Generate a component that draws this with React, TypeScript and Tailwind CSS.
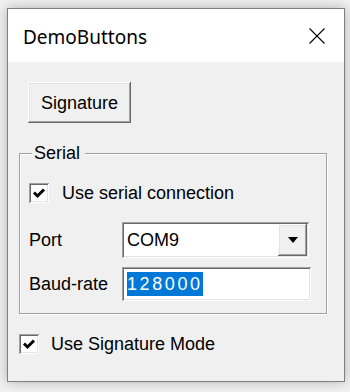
const sunken =
  'shadow-[inset_1px_1px_0_#a0a0a0,inset_-1px_-1px_0_#ffffff,inset_2px_2px_0_#696969,inset_-2px_-2px_0_#e3e3e3]';
const raised =
  'shadow-[inset_-1px_-1px_0_#696969,inset_1px_1px_0_#ffffff,inset_-2px_-2px_0_#a0a0a0,inset_2px_2px_0_#e3e3e3]';

function CheckBox({ label, gap }: { label: string; gap: string }) {
  return (
    <div className={`flex items-center h-[20px] ${gap}`}>
      <div className={`w-[20px] h-[20px] bg-white flex items-center justify-center ${sunken}`}>
        <svg width="14" height="14" viewBox="0 0 14 14">
          <path d="M2 6.5 L5.5 10 L12 3.5" fill="none" stroke="#000" strokeWidth="3" />
        </svg>
      </div>
      <span className="text-[18px] leading-[20px] text-black">{label}</span>
    </div>
  );
}

export default function App() {
  return (
    <div
      className="w-[350px] h-[392px] bg-[#f2f2f2] pt-[8px] pl-[7px] overflow-hidden"
      style={{ fontFamily: '"Liberation Sans", Arial, sans-serif' }}
    >
      <div className="w-[338px] h-[374px] border border-[#7f7f7f] bg-white flex flex-col shadow-[0_0_12px_rgba(0,0,0,0.28)]">
        {/* title bar */}
        <div className="h-[53px] flex items-center justify-between pl-[15px] pr-[19px] shrink-0">
          <span
            className="text-[19px] leading-[24px] text-black mt-[2px]"
            style={{ fontFamily: '"Noto Sans", "Open Sans", sans-serif' }}
          >
            DemoButtons
          </span>
          <svg width="16" height="16" viewBox="0 0 16 16">
            <path d="M0.5 0.5 L15.5 15.5 M15.5 0.5 L0.5 15.5" stroke="#000" strokeWidth="1.1" />
          </svg>
        </div>

        {/* client area */}
        <div className="flex-1 bg-[#f0f0f0] pl-[11px] pt-[20px]">
          <button
            className={`ml-[9px] w-[103px] h-[41px] bg-[#f0f0f0] text-[18px] leading-[20px] text-black ${raised}`}
          >
            Signature
          </button>

          <fieldset className="mt-[20px] w-[307px] p-0 border border-[#a0a0a0] shadow-[1px_1px_0_#ffffff,inset_1px_1px_0_#ffffff]">
            <legend className="ml-[12px] pl-[2px] pr-[5px] bg-[#f0f0f0] text-[18px] leading-[20px] text-black">
              Serial
            </legend>
            <div className="pl-[9px] pr-[15px] pt-[20px] pb-[12px]">
              <CheckBox label="Use serial connection" gap="gap-[13px]" />

              <div className="flex items-center mt-[19px] h-[36px]">
                <span className="w-[93px] text-[18px] leading-[20px] text-black">Port</span>
                <div className={`w-[187px] h-[36px] bg-white flex items-center p-[2px] ${sunken}`}>
                  <span className="flex-1 pl-[3px] text-[18px] leading-[20px] text-black">COM9</span>
                  <div className={`w-[29px] h-[32px] bg-[#f0f0f0] flex items-center justify-center ${raised}`}>
                    <svg width="10" height="6" viewBox="0 0 10 6">
                      <path d="M0 0 H10 L5 6 Z" fill="#000" />
                    </svg>
                  </div>
                </div>
              </div>

              <div className="flex items-center mt-[9px] h-[34px]">
                <span className="w-[93px] text-[18px] leading-[20px] text-black">Baud-rate</span>
                <div className={`w-[189px] h-[34px] bg-white flex items-center pl-[5px] ${sunken}`}>
                  <span className="bg-[#0078d7] text-white text-[18px] leading-[24px] tracking-[2.6px]">128000</span>
                </div>
              </div>
            </div>
          </fieldset>

          <div className="mt-[20px]">
            <CheckBox label="Use Signature Mode" gap="gap-[12px]" />
          </div>
        </div>
      </div>
    </div>
  );
}
